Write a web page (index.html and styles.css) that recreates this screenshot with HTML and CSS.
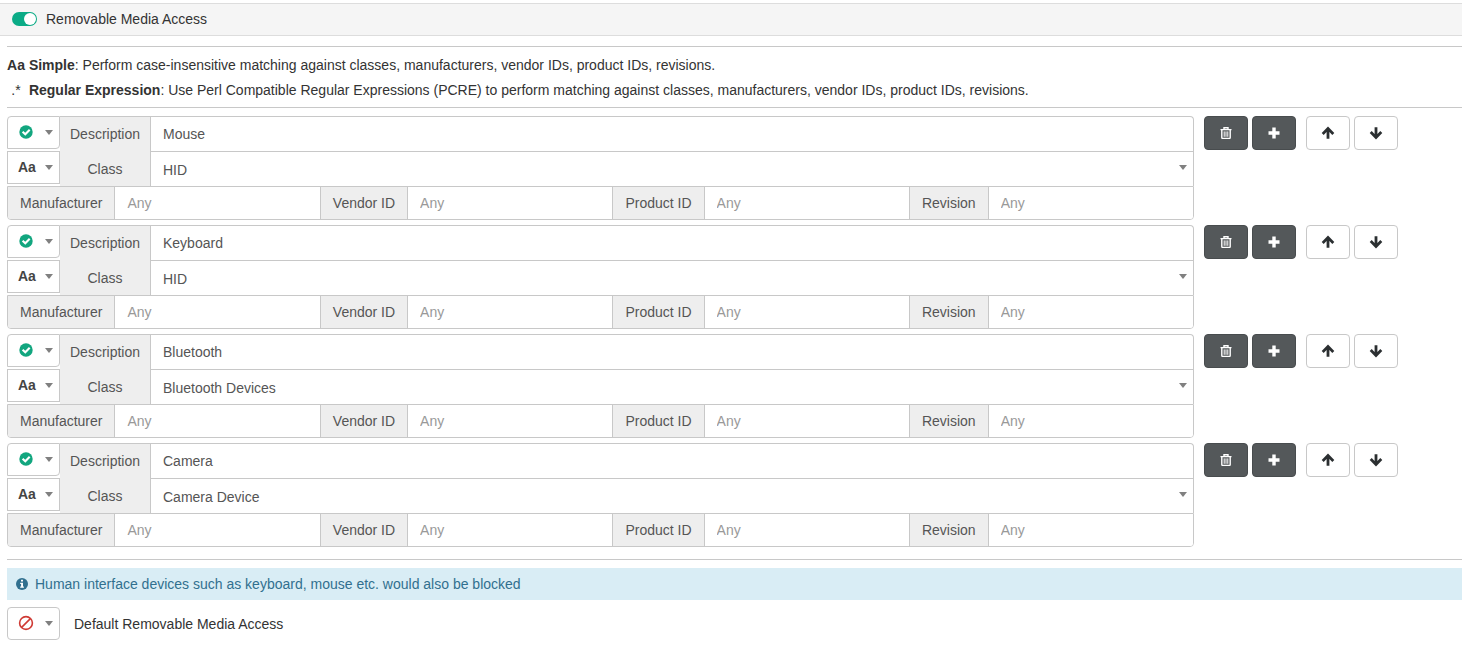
FILE: index.html
```html
<!DOCTYPE html>
<html lang="en">
<head>
  <meta charset="UTF-8">
  <meta name="viewport" content="width=device-width, initial-scale=1.0">
  <title>Removable Media Access</title>
  <link rel="stylesheet" href="styles.css">
</head>
<body>
  <!-- icons -->
  <svg class="sprite" aria-hidden="true">
    <symbol id="check" viewBox="0 0 14 14">
      <circle cx="7" cy="7" r="6.7" fill="#12a67f"/>
      <path d="M3.6 6.7l2.7 2.6 4.4-4.5" fill="none" stroke="#fff" stroke-width="2.1"/>
    </symbol>
    <symbol id="ban" viewBox="0 0 16 16">
      <circle cx="8" cy="8" r="6.4" fill="none" stroke="#cf3a34" stroke-width="1.6"/>
      <path d="M3.6 12.4l8.8-8.8" stroke="#cf3a34" stroke-width="1.6"/>
    </symbol>
    <symbol id="caret" viewBox="0 0 8 5">
      <path d="M0 0h8L4 5z" fill="#808080"/>
    </symbol>
    <symbol id="trash" viewBox="0 0 12 12">
      <path d="M0.5 2.6h11M4 2.6V0.7h4v1.9M1.8 2.6v8q0 .8.8.8h6.8q.8 0 .8-.8v-8" fill="none" stroke="#fff" stroke-width="1.4"/>
      <path d="M4.2 4.4v5.4M6 4.4v5.4M7.8 4.4v5.4" stroke="#fff" stroke-width="1"/>
    </symbol>
    <symbol id="plus" viewBox="0 0 12 12">
      <path d="M4.3 0.5h3.4v3.8h3.8v3.4H7.7v3.8H4.3V7.7H0.5V4.3h3.8z" fill="#fff"/>
    </symbol>
    <symbol id="up" viewBox="0 0 14 14">
      <path d="M7 12.8V3M1.7 7.9L7 2.6l5.3 5.3" fill="none" stroke="#2b2f31" stroke-width="2.8"/>
    </symbol>
    <symbol id="down" viewBox="0 0 14 14">
      <path d="M7 1.2V11M1.7 6.1L7 11.4l5.3-5.3" fill="none" stroke="#2b2f31" stroke-width="2.8"/>
    </symbol>
    <symbol id="info" viewBox="0 0 12 12">
      <circle cx="6" cy="6" r="6" fill="#31708f"/>
      <path d="M5 1.8h2v1.6H5zM4.2 4.7H7v3.7h.9v1.4H4.2V8.4h.9V6.1h-.9z" fill="#fff"/>
    </symbol>
  </svg>

  <header class="panel-heading">
    <input type="checkbox" class="switch" id="media-access" checked>
    <label for="media-access">Removable Media Access</label>
  </header>

  <main class="content">
    <div class="help">
      <p><b><span class="mode">Aa</span> Simple</b>: Perform case-insensitive matching against classes, manufacturers, vendor IDs, product IDs, revisions.</p>
      <p><span class="mode">.*</span> <b>Regular Expression</b>: Use Perl Compatible Regular Expressions (PCRE) to perform matching against classes, manufacturers, vendor IDs, product IDs, revisions.</p>
    </div>

    <div class="rules">
      <section class="rule">
        <div class="rule-card">
          <div class="row">
            <button class="toggle" aria-label="Allow" aria-haspopup="menu"><svg class="icon-state"><use href="#check"/></svg><svg class="caret"><use href="#caret"/></svg></button>
            <label class="addon main first" for="desc-1">Description</label>
            <input type="text" class="field first" id="desc-1" value="Mouse">
          </div>
          <div class="row">
            <div class="toggle"><select class="match" aria-label="Matching"><option>Aa</option><option>.*</option></select><svg class="caret"><use href="#caret"/></svg></div>
            <label class="addon main" for="class-1">Class</label>
            <div class="select"><select class="field" id="class-1"><option>HID</option></select><svg class="caret"><use href="#caret"/></svg></div>
          </div>
          <div class="row ids">
            <label class="addon" for="man-1">Manufacturer</label>
            <input type="text" class="field" id="man-1" placeholder="Any">
            <label class="addon" for="ven-1">Vendor ID</label>
            <input type="text" class="field" id="ven-1" placeholder="Any">
            <label class="addon" for="prod-1">Product ID</label>
            <input type="text" class="field" id="prod-1" placeholder="Any">
            <label class="addon" for="rev-1">Revision</label>
            <input type="text" class="field" id="rev-1" placeholder="Any">
          </div>
        </div>
        <div class="actions">
          <button class="btn dark" aria-label="Delete"><svg class="icon-trash"><use href="#trash"/></svg></button>
          <button class="btn dark" aria-label="Add"><svg class="icon-plus"><use href="#plus"/></svg></button>
          <button class="btn move" aria-label="Move up"><svg class="icon-arrow"><use href="#up"/></svg></button>
          <button class="btn" aria-label="Move down"><svg class="icon-arrow"><use href="#down"/></svg></button>
        </div>
      </section>

      <section class="rule">
        <div class="rule-card">
          <div class="row">
            <button class="toggle" aria-label="Allow" aria-haspopup="menu"><svg class="icon-state"><use href="#check"/></svg><svg class="caret"><use href="#caret"/></svg></button>
            <label class="addon main first" for="desc-2">Description</label>
            <input type="text" class="field first" id="desc-2" value="Keyboard">
          </div>
          <div class="row">
            <div class="toggle"><select class="match" aria-label="Matching"><option>Aa</option><option>.*</option></select><svg class="caret"><use href="#caret"/></svg></div>
            <label class="addon main" for="class-2">Class</label>
            <div class="select"><select class="field" id="class-2"><option>HID</option></select><svg class="caret"><use href="#caret"/></svg></div>
          </div>
          <div class="row ids">
            <label class="addon" for="man-2">Manufacturer</label>
            <input type="text" class="field" id="man-2" placeholder="Any">
            <label class="addon" for="ven-2">Vendor ID</label>
            <input type="text" class="field" id="ven-2" placeholder="Any">
            <label class="addon" for="prod-2">Product ID</label>
            <input type="text" class="field" id="prod-2" placeholder="Any">
            <label class="addon" for="rev-2">Revision</label>
            <input type="text" class="field" id="rev-2" placeholder="Any">
          </div>
        </div>
        <div class="actions">
          <button class="btn dark" aria-label="Delete"><svg class="icon-trash"><use href="#trash"/></svg></button>
          <button class="btn dark" aria-label="Add"><svg class="icon-plus"><use href="#plus"/></svg></button>
          <button class="btn move" aria-label="Move up"><svg class="icon-arrow"><use href="#up"/></svg></button>
          <button class="btn" aria-label="Move down"><svg class="icon-arrow"><use href="#down"/></svg></button>
        </div>
      </section>

      <section class="rule">
        <div class="rule-card">
          <div class="row">
            <button class="toggle" aria-label="Allow" aria-haspopup="menu"><svg class="icon-state"><use href="#check"/></svg><svg class="caret"><use href="#caret"/></svg></button>
            <label class="addon main first" for="desc-3">Description</label>
            <input type="text" class="field first" id="desc-3" value="Bluetooth">
          </div>
          <div class="row">
            <div class="toggle"><select class="match" aria-label="Matching"><option>Aa</option><option>.*</option></select><svg class="caret"><use href="#caret"/></svg></div>
            <label class="addon main" for="class-3">Class</label>
            <div class="select"><select class="field" id="class-3"><option>Bluetooth Devices</option></select><svg class="caret"><use href="#caret"/></svg></div>
          </div>
          <div class="row ids">
            <label class="addon" for="man-3">Manufacturer</label>
            <input type="text" class="field" id="man-3" placeholder="Any">
            <label class="addon" for="ven-3">Vendor ID</label>
            <input type="text" class="field" id="ven-3" placeholder="Any">
            <label class="addon" for="prod-3">Product ID</label>
            <input type="text" class="field" id="prod-3" placeholder="Any">
            <label class="addon" for="rev-3">Revision</label>
            <input type="text" class="field" id="rev-3" placeholder="Any">
          </div>
        </div>
        <div class="actions">
          <button class="btn dark" aria-label="Delete"><svg class="icon-trash"><use href="#trash"/></svg></button>
          <button class="btn dark" aria-label="Add"><svg class="icon-plus"><use href="#plus"/></svg></button>
          <button class="btn move" aria-label="Move up"><svg class="icon-arrow"><use href="#up"/></svg></button>
          <button class="btn" aria-label="Move down"><svg class="icon-arrow"><use href="#down"/></svg></button>
        </div>
      </section>

      <section class="rule">
        <div class="rule-card">
          <div class="row">
            <button class="toggle" aria-label="Allow" aria-haspopup="menu"><svg class="icon-state"><use href="#check"/></svg><svg class="caret"><use href="#caret"/></svg></button>
            <label class="addon main first" for="desc-4">Description</label>
            <input type="text" class="field first" id="desc-4" value="Camera">
          </div>
          <div class="row">
            <div class="toggle"><select class="match" aria-label="Matching"><option>Aa</option><option>.*</option></select><svg class="caret"><use href="#caret"/></svg></div>
            <label class="addon main" for="class-4">Class</label>
            <div class="select"><select class="field" id="class-4"><option>Camera Device</option></select><svg class="caret"><use href="#caret"/></svg></div>
          </div>
          <div class="row ids">
            <label class="addon" for="man-4">Manufacturer</label>
            <input type="text" class="field" id="man-4" placeholder="Any">
            <label class="addon" for="ven-4">Vendor ID</label>
            <input type="text" class="field" id="ven-4" placeholder="Any">
            <label class="addon" for="prod-4">Product ID</label>
            <input type="text" class="field" id="prod-4" placeholder="Any">
            <label class="addon" for="rev-4">Revision</label>
            <input type="text" class="field" id="rev-4" placeholder="Any">
          </div>
        </div>
        <div class="actions">
          <button class="btn dark" aria-label="Delete"><svg class="icon-trash"><use href="#trash"/></svg></button>
          <button class="btn dark" aria-label="Add"><svg class="icon-plus"><use href="#plus"/></svg></button>
          <button class="btn move" aria-label="Move up"><svg class="icon-arrow"><use href="#up"/></svg></button>
          <button class="btn" aria-label="Move down"><svg class="icon-arrow"><use href="#down"/></svg></button>
        </div>
      </section>
    </div>

    <div class="default">
      <p class="alert"><svg class="icon-info"><use href="#info"/></svg>Human interface devices such as keyboard, mouse etc. would also be blocked</p>
      <div class="default-access">
        <button class="toggle single" id="default-access" aria-haspopup="menu"><svg class="icon-state"><use href="#ban"/></svg><svg class="caret"><use href="#caret"/></svg></button>
        <label for="default-access">Default Removable Media Access</label>
      </div>
    </div>
  </main>
</body>
</html>
```

FILE: styles.css
```css
* {
  box-sizing: border-box;
}

body {
  margin: 0;
  padding-top: 3px;
  background-color: #fff;
  color: #333;
  font-family: "Liberation Sans", Arial, sans-serif;
  font-size: 14px;
  line-height: 20px;
}

p {
  margin: 0;
}

svg {
  display: block;
  flex: none;
}

.sprite {
  position: absolute;
  width: 0;
  height: 0;
}

input, select, button {
  margin: 0;
  font: inherit;
}

/* heading */
.panel-heading {
  display: flex;
  align-items: center;
  gap: 9px;
  height: 33px;
  padding: 0 0 2px 12px;
  background-color: #f5f5f5;
  border-top: 1px solid #ddd;
  border-bottom: 1px solid #ddd;
}

.switch {
  appearance: none;
  display: flex;
  justify-content: flex-end;
  width: 25px;
  height: 14px;
  padding: 1px;
  border-radius: 7px;
  background-color: #bbb;
}

.switch:checked {
  background-color: #0bab86;
}

.switch::before {
  content: "";
  width: 12px;
  height: 12px;
  border-radius: 50%;
  background-color: #fff;
}

.content {
  padding: 10px 0 0 7px;
}

.help {
  padding: 6px 0 4px;
  border-top: 1px solid #c8c8c8;
  border-bottom: 1px solid #c8c8c8;
  line-height: 25px;
}

.mode {
  display: inline-block;
  width: 18px;
  text-align: center;
}

/* rules */
.rules {
  display: flex;
  flex-direction: column;
  gap: 5px;
  padding: 8px 0 12px;
}

.rule {
  display: flex;
  gap: 10px;
}

.rule-card {
  flex: 1;
  min-width: 0;
}

.row {
  display: flex;
  height: 35px;
}

.row.ids {
  height: 34px;
  border: 1px solid #c8c8c8;
  border-radius: 0 0 4px 4px;
  overflow: hidden;
}

.toggle {
  position: relative;
  display: flex;
  align-items: center;
  flex: none;
  width: 53px;
  height: 33px;
  padding: 0 6px 0 11px;
  justify-content: space-between;
  background-color: #fff;
  border: 1px solid #c8c8c8;
}

button.toggle {
  border-radius: 4px 0 4px 0;
}

button.toggle.single {
  border-radius: 4px;
}

.caret {
  width: 8px;
  height: 5px;
  pointer-events: none;
}

.match {
  appearance: none;
  position: absolute;
  inset: 0;
  width: 100%;
  padding: 0 0 2px 10px;
  border: 0;
  background: transparent;
  color: #444;
  font-weight: bold;
}

.match + .caret {
  margin-left: auto;
}

.addon {
  flex: none;
  display: flex;
  align-items: center;
  justify-content: center;
  padding: 0 12px;
  background-color: #eee;
  border-right: 1px solid #c8c8c8;
  color: #555;
}

.addon.main {
  width: 91px;
  padding: 0;
}

.addon.first {
  border-top: 1px solid #c8c8c8;
}

.field {
  flex: 1;
  width: 100%;
  min-width: 0;
  padding: 0 12px;
  background-color: #fff;
  border: 1px solid #c8c8c8;
  border-width: 1px 1px 0 0;
  border-radius: 0;
  color: #555;
}

.field.first {
  border-radius: 0 4px 0 0;
}

.field::placeholder {
  color: #999;
  opacity: 1;
}

.ids .field {
  border-width: 0 1px 0 0;
}

.ids .field:last-child {
  border: 0;
}

.select {
  position: relative;
  display: flex;
  flex: 1;
}

.select .field {
  appearance: none;
  padding-top: 2px;
}

.select .caret {
  position: absolute;
  top: 14px;
  right: 7px;
}

/* row buttons */
.actions {
  display: flex;
  gap: 4px;
  flex: none;
  width: 258px;
}

.btn {
  display: flex;
  align-items: center;
  justify-content: center;
  width: 44px;
  height: 34px;
  padding: 0;
  background-color: #fff;
  border: 1px solid #c8c8c8;
  border-radius: 4px;
}

.btn.dark {
  background-color: #54585a;
  border-color: #484c4e;
}

.btn.move {
  margin-left: 6px;
}

.icon-state {
  width: 14px;
  height: 14px;
  margin-bottom: 2px;
}

.single .icon-state {
  width: 16px;
  height: 16px;
  margin-left: -1px;
}

.icon-trash {
  width: 12px;
  height: 12px;
}

.icon-plus {
  width: 12px;
  height: 12px;
}

.icon-arrow {
  width: 14px;
  height: 14px;
}

/* default access */
.default {
  padding-top: 8px;
  border-top: 1px solid #c8c8c8;
}

.alert {
  display: flex;
  align-items: center;
  gap: 7px;
  height: 32px;
  padding-left: 9px;
  background-color: #d9edf5;
  color: #31708f;
}

.icon-info {
  width: 12px;
  height: 12px;
}

.default-access {
  display: flex;
  align-items: center;
  gap: 14px;
  padding-top: 7px;
}
```
